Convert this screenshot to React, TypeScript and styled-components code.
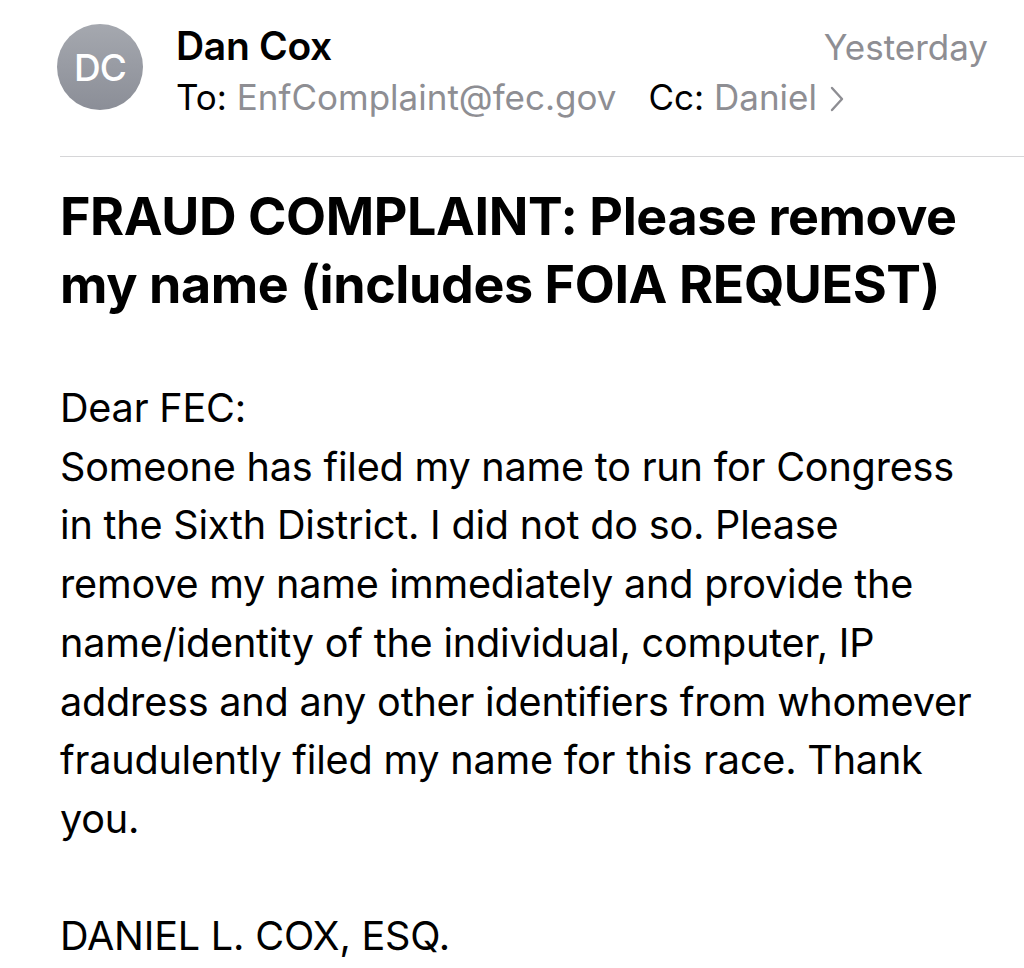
import React from "react";
import styled, { createGlobalStyle } from "styled-components";

const GlobalStyle = createGlobalStyle`
  html, body {
    margin: 0;
    padding: 0;
    background: #fff;
  }
  body {
    font-family: Inter, "Liberation Sans", Arial, sans-serif;
    color: #000;
    -webkit-font-smoothing: antialiased;
  }
`;

const Page = styled.div`
  width: 1024px;
  height: 968px;
  overflow: hidden;
  background: #fff;
`;

const Header = styled.header`
  display: flex;
  align-items: flex-start;
  padding: 24px 36px 0 57px;
  height: 156px;
  box-sizing: border-box;
`;

const Avatar = styled.div`
  flex: 0 0 auto;
  width: 86px;
  height: 86px;
  border-radius: 50%;
  background: linear-gradient(180deg, #a5a8af 0%, #8b8e97 100%);
  color: #fff;
  display: flex;
  align-items: center;
  justify-content: center;
  font-size: 37px;
  font-weight: 500;
  letter-spacing: -1px;
`;

const Meta = styled.div`
  flex: 1;
  margin-left: 33px;
  display: flex;
  flex-direction: column;
`;

const TopLine = styled.div`
  display: flex;
  justify-content: space-between;
  align-items: baseline;
`;

const Sender = styled.div`
  font-size: 39px;
  font-weight: 600;
  line-height: 44px;
  letter-spacing: -0.3px;
`;

const When = styled.div`
  font-size: 35px;
  color: #8e8e93;
  line-height: 44px;
`;

const Recipients = styled.div`
  display: flex;
  align-items: center;
  gap: 32px;
  font-size: 35px;
  line-height: 46px;
  margin-top: 5px;
`;

const Field = styled.span`
  white-space: nowrap;
`;

const Value = styled.span`
  color: #8e8e93;
`;

const Chevron = styled.svg`
  width: 16px;
  height: 28px;
  margin-left: 12px;
  vertical-align: -3px;
`;

const Divider = styled.hr`
  margin: 0 0 0 60px;
  border: none;
  border-top: 1.5px solid #d6d6d8;
`;

const Body = styled.main`
  padding: 0 0 0 60px;
`;

const Subject = styled.h1`
  margin: 26px 0 0;
  font-size: 52px;
  font-weight: 700;
  line-height: 68px;
  letter-spacing: -0.4px;
`;

const Message = styled.p`
  margin: 60px 0 0;
  font-size: 39.6px;
  line-height: 58.7px;
  font-weight: 400;
  letter-spacing: -0.2px;
`;

export default function App() {
  return (
    <Page>
      <GlobalStyle />
      <Header>
        <Avatar>DC</Avatar>
        <Meta>
          <TopLine>
            <Sender>Dan Cox</Sender>
            <When>Yesterday</When>
          </TopLine>
          <Recipients>
            <Field>
              To: <Value>EnfComplaint@fec.gov</Value>
            </Field>
            <Field>
              Cc: <Value>Daniel</Value>
              <Chevron viewBox="0 0 16 28" fill="none">
                <path
                  d="M3 3 L13 14 L3 25"
                  stroke="#8e8e93"
                  strokeWidth="2.4"
                  strokeLinecap="round"
                  strokeLinejoin="round"
                />
              </Chevron>
            </Field>
          </Recipients>
        </Meta>
      </Header>
      <Divider />
      <Body>
        <Subject>
          FRAUD COMPLAINT: Please remove
          <br />
          my name (includes FOIA REQUEST)
        </Subject>
        <Message>
          Dear FEC:
          <br />
          Someone has filed my name to run for Congress
          <br />
          in the Sixth District. I did not do so. Please
          <br />
          remove my name immediately and provide the
          <br />
          name/identity of the individual, computer, IP
          <br />
          address and any other identifiers from whomever
          <br />
          fraudulently filed my name for this race. Thank
          <br />
          you.
          <br />
          <br />
          DANIEL L. COX, ESQ.
        </Message>
      </Body>
    </Page>
  );
}
